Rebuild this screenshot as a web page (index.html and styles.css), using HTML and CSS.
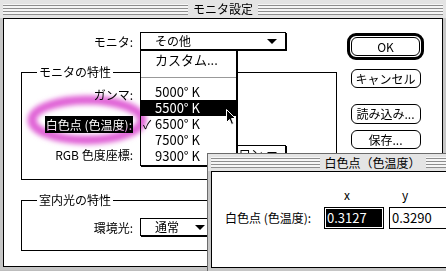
FILE: index.html
```html
<!DOCTYPE html>
<html lang="ja">
<head>
<meta charset="utf-8">
<title>モニタ設定</title>
<link rel="stylesheet" href="styles.css">
</head>
<body>
<div class="win win-main">
  <div class="titlebar"><span class="stripes"></span><span class="title">モニタ設定</span><span class="stripes"></span></div>
  <div class="content">
    <div class="left">
      <div class="frow">
        <span class="label lw-top">モニタ:</span>
        <div class="popup pw-wide"><span class="ptext">その他</span><i class="tri"></i></div>
      </div>
      <div class="group g1">
        <span class="gtitle">モニタの特性</span>
        <div class="frow">
          <span class="label">ガンマ:</span>
        </div>
        <div class="frow">
          <span class="label"><span class="hl">白色点 (色温度):</span></span>
        </div>
        <div class="frow">
          <span class="label">RGB 色度座標:</span>
          <div class="popup pw-wide"><span class="ptext ptext-rgb">ソニー トリニトロン</span><i class="tri"></i></div>
        </div>
      </div>
      <div class="group g2">
        <span class="gtitle">室内光の特性</span>
        <div class="frow">
          <span class="label">環境光:</span>
          <div class="popup pw-mid"><span class="ptext">通常</span><i class="tri"></i></div>
        </div>
      </div>
    </div>
    <div class="right">
      <div class="btn-default"><div class="btn">OK</div></div>
      <div class="btn btn-cancel">キャンセル</div>
      <div class="btn btn-load">読み込み...</div>
      <div class="btn btn-save">保存...</div>
    </div>
  </div>
</div>

<div class="menu">
  <div class="mi"><span class="chk"></span>カスタム...</div>
  <div class="msep"></div>
  <div class="mi"><span class="chk"></span>5000° K</div>
  <div class="mi sel"><span class="chk"></span>5500° K</div>
  <div class="mi"><span class="chk">✓</span>6500° K</div>
  <div class="mi"><span class="chk"></span>7500° K</div>
  <div class="mi"><span class="chk"></span>9300° K</div>
</div>

<svg class="cursor" width="12" height="19" viewBox="0 0 12 19">
  <path d="M1.5 1.5 L1.5 14.5 L4.5 11.5 L6.5 16.5 L8.5 15.5 L6.5 10.5 L10.5 10.5 Z" fill="#000" stroke="#fff" stroke-width="1"/>
</svg>

<svg class="ring" width="200" height="100" viewBox="0 0 200 100">
  <defs><filter id="soft" x="-20%" y="-40%" width="140%" height="180%"><feGaussianBlur stdDeviation="2.6"/></filter></defs>
  <ellipse cx="87" cy="42" rx="55" ry="20" fill="none" stroke="#e062d6" stroke-width="9" filter="url(#soft)"/>
</svg>

<div class="win win-sub">
  <div class="titlebar"><span class="stripes"></span><span class="title">白色点（色温度）</span><span class="stripes"></span></div>
  <div class="content sub-content">
    <span class="colhead ch-x">x</span>
    <span class="colhead ch-y">y</span>
    <span class="flabel">白色点 (色温度):</span>
    <div class="field field-focus"><span class="seltext">0.3127</span></div>
    <div class="field">0.3290</div>
  </div>
</div>
</body>
</html>
```

FILE: styles.css
```css
* { box-sizing: border-box; margin: 0; padding: 0; }

body {
  width: 446px;
  height: 271px;
  overflow: hidden;
  position: relative;
  background: #bdbdbd;
  font-family: "Noto Sans CJK JP", "DejaVu Sans", sans-serif;
  font-size: 12px;
  line-height: 16px;
  color: #000;
}

/* windows */
.win {
  position: absolute;
  display: flex;
  flex-direction: column;
  background: #c6c6c6;
  padding: 0 3px 3px;
}
.win-main { left: 0; top: 0; width: 446px; height: 270px; }
.win-sub { left: 207px; top: 153px; width: 330px; height: 118px; border-top: 1px solid #6b6b6b; border-left: 1px solid #6b6b6b; padding-left: 3px; }

.titlebar {
  height: 18px;
  flex: none;
  display: flex;
  align-items: center;
  gap: 5px;
  background: #e4e4e4;
  margin: 0 -3px;
  padding: 0 3px;
}
.win-sub .titlebar { height: 17px; }
.stripes {
  flex: 1;
  height: 11px;
  background: repeating-linear-gradient(to bottom, #f6f6f6 0 1px, #8e8e8e 1px 2px, #f6f6f6 2px 3px);
}
.title { flex: none; font-size: 12px; line-height: 16px; }

.content {
  flex: 1;
  background: #fff;
  border: 1px solid #000;
  display: flex;
}

/* main dialog */
.win-main .content { padding: 13px 0 0 17px; }

.left { width: 316px; display: flex; flex-direction: column; }

.frow { display: flex; align-items: center; height: 19px; gap: 7px; }
.label { width: 111px; flex: none; text-align: right; white-space: nowrap; }
.lw-top { width: 112px; }

.hl { background: #000; color: #fff; padding: 0 1px; }

.popup {
  flex: none;
  position: relative;
  height: 18px;
  border: 1px solid #000;
  box-shadow: 1px 1px 0 #000;
  background: #fff;
  display: flex;
  align-items: center;
  padding-left: 14px;
  overflow: hidden;
  align-self: flex-start;
}
.pw-wide { width: 146px; }
.pw-mid { width: 74px; }
.ptext { white-space: nowrap; }
.ptext-rgb { margin-left: -3px; }
.tri {
  position: absolute;
  right: 8px;
  top: 6px;
  width: 0;
  height: 0;
  border-left: 5px solid transparent;
  border-right: 5px solid transparent;
  border-top: 5px solid #000;
}

.group {
  position: relative;
  border: 1px solid #000;
  width: 316px;
}
.gtitle {
  position: absolute;
  top: -9px;
  left: 15px;
  background: #fff;
  padding: 0 2px;
  white-space: nowrap;
}
.g1 {
  margin-top: 21px;
  height: 108px;
  padding-top: 12px;
  display: flex;
  flex-direction: column;
  gap: 11px;
}
.g2 {
  margin-top: 20px;
  height: 51px;
  padding-top: 17px;
}

.right {
  display: flex;
  flex-direction: column;
  align-items: center;
  margin-left: 10px;
  margin-top: 1px;
  width: 77px;
}
.btn-default {
  width: 77px;
  height: 27px;
  border: 3px solid #000;
  border-radius: 9px;
  padding: 1px;
}
.btn {
  width: 70px;
  height: 19px;
  border: 1px solid #000;
  border-radius: 6px;
  background: #fff;
  display: flex;
  align-items: center;
  justify-content: center;
  white-space: nowrap;
}
.btn-default .btn { width: 69px; height: 19px; }
.btn-cancel { margin-top: 9px; }
.btn-load { margin-top: 16px; height: 20px; }
.btn-save { margin-top: 6px; }

/* popup menu (overlay) */
.menu {
  position: absolute;
  left: 140px;
  top: 50px;
  width: 97px;
  height: 116px;
  background: #fff;
  border: 1px solid #000;
  box-shadow: 1px 1px 0 #000;
  padding-top: 1px;
}
.mi {
  height: 16px;
  display: flex;
  align-items: center;
  padding-left: 2px;
  white-space: nowrap;
  font-size: 13px;
}
.mi.sel { background: #000; color: #fff; }
.chk { width: 12px; flex: none; font-size: 12px; }
.msep {
  height: 16px;
  background: linear-gradient(#999, #999) 0 9px / 100% 1px no-repeat;
}

.cursor { position: absolute; left: 225px; top: 108px; }

.ring {
  position: absolute;
  left: 0;
  top: 78px;
  mix-blend-mode: multiply;
  pointer-events: none;
}

/* white point sub window */
.sub-content {
  display: grid;
  grid-template-columns: 94px 60px 61px;
  grid-template-rows: 14px 22px;
  column-gap: 5px;
  row-gap: 5px;
  padding: 16px 0 0 13px;
  align-items: center;
  align-content: start;
}
.colhead { grid-row: 1; font-size: 12px; }
.ch-x { grid-column: 2; padding-left: 20px; }
.ch-y { grid-column: 3; padding-left: 13px; }
.flabel { grid-row: 2; grid-column: 1; white-space: nowrap; }
.field {
  grid-row: 2;
  height: 22px;
  border: 1px solid #000;
  display: flex;
  align-items: center;
  padding-left: 2px;
  font-size: 13px;
}
.field-focus { grid-column: 2; padding: 1px; }
.field:not(.field-focus) { grid-column: 3; }
.seltext { background: #000; color: #fff; width: 100%; height: 100%; display: flex; align-items: center; padding-left: 1px; }
```
